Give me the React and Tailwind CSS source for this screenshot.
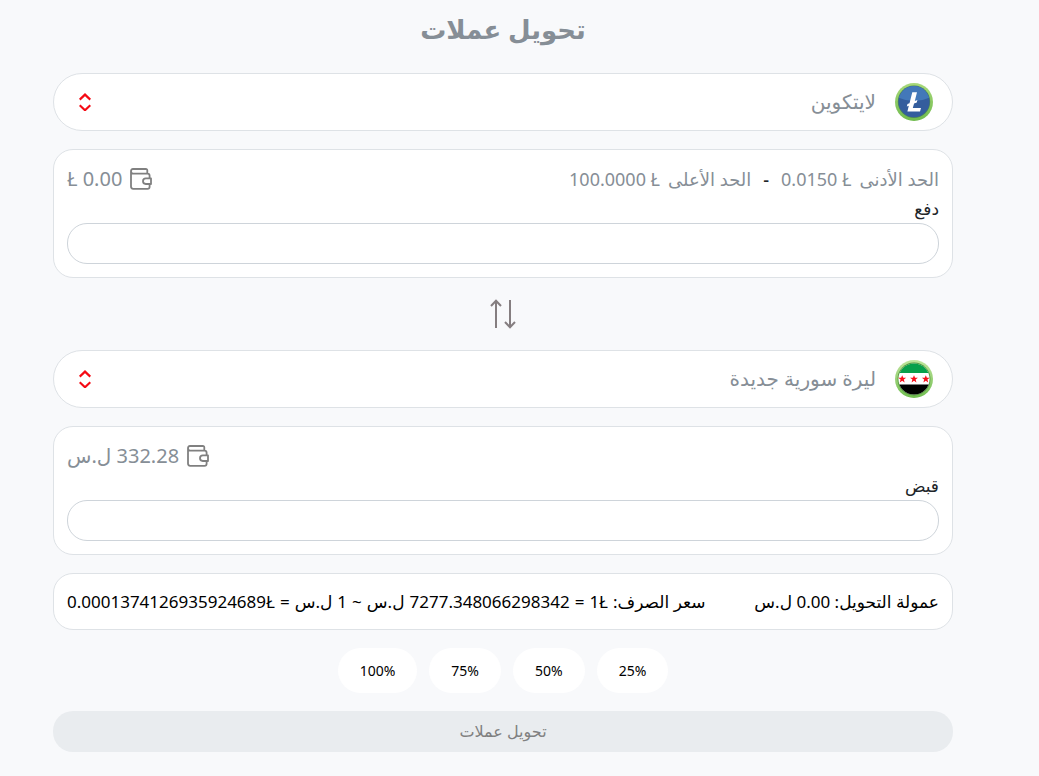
import React, { useId, useState } from "react";

function LitecoinIcon() {
  return (
    <svg viewBox="0 0 38 38" className="size-[38px] shrink-0" aria-hidden="true">
      <defs>
        <linearGradient id="ltc-ring" x1="0" y1="0" x2="0" y2="1">
          <stop offset="0" stopColor="#a9d97b" />
          <stop offset="1" stopColor="#6fbb4d" />
        </linearGradient>
        <clipPath id="ltc-face">
          <circle cx="19" cy="18.7" r="15.6" />
        </clipPath>
      </defs>
      <circle cx="19" cy="19" r="19" fill="url(#ltc-ring)" />
      <circle cx="19" cy="18.7" r="16.2" fill="#4f8a53" />
      <g clipPath="url(#ltc-face)">
        <rect width="38" height="38" fill="#345d9d" />
        <path d="M0 0H38V13Q19 23 0 13Z" fill="#4378b9" />
      </g>
      <path d="M17.3 9.3H22L19.8 18L22.4 17L21.8 19.5L19.1 20.6L17.8 25H26L25 28.5H12.4L13.8 22.8L11.8 23.6L12.5 21.1L14.5 20.2Z" fill="#fff" />
    </svg>
  );
}

const STAR = "M0 -3L0.8 -1H2.9L1.2 0.3L1.8 2.4L0 1.1L-1.8 2.4L-1.2 0.3L-2.9 -1H-0.8Z";

function SyriaIcon() {
  return (
    <svg viewBox="0 0 38 38" className="size-[38px] shrink-0" aria-hidden="true">
      <defs>
        <linearGradient id="syp-ring" x1="0" y1="0" x2="0" y2="1">
          <stop offset="0" stopColor="#c0e59d" />
          <stop offset="1" stopColor="#70bd50" />
        </linearGradient>
        <clipPath id="syp-face">
          <circle cx="19" cy="19" r="15.6" />
        </clipPath>
      </defs>
      <circle cx="19" cy="19" r="19" fill="url(#syp-ring)" />
      <circle cx="19" cy="19" r="16.4" fill="#4e9438" />
      <g clipPath="url(#syp-face)">
        <rect width="38" height="38" fill="#fff" />
        <rect width="38" height="13" fill="#08a04b" />
        <rect y="24.5" width="38" height="14" fill="#000" />
      </g>
      <g fill="#f50f1a">
        <path d={STAR} transform="translate(7.2 19.2) scale(1.35)" />
        <path d={STAR} transform="translate(19 19.2) scale(1.35)" />
        <path d={STAR} transform="translate(30.8 19.2) scale(1.35)" />
      </g>
    </svg>
  );
}

function Chevrons() {
  return (
    <svg viewBox="0 0 12 18" className="h-[18px] w-3 shrink-0" fill="none" stroke="#f50a14" strokeWidth="2.2" aria-hidden="true">
      <path d="M0.7 6.6L6 1.6L11.3 6.6M0.7 12.2L6 17.2L11.3 12.2" />
    </svg>
  );
}

function WalletIcon() {
  return (
    <svg viewBox="0 0 22 22" className="size-[22px] shrink-0" fill="none" stroke="#808080" strokeWidth="1.8" strokeLinejoin="round" aria-hidden="true">
      <path d="M17.3 5.6V2.5Q17.3 1 15.8 1H3Q1 1 1 3.3Q1 5.6 3 5.6H17.5Q19.6 5.6 19.6 7.7V10.2M1 3.3V18.6Q1 20.8 3.2 20.8H17.5Q19.6 20.8 19.6 18.7V16.2" />
      <path d="M21 10.4V16H15.8Q13 15.8 13 13.2Q13 10.4 15.8 10.4Z" />
    </svg>
  );
}

function SwapIcon() {
  return (
    <svg viewBox="0 0 26 30" className="h-[30px] w-[26px]" fill="none" stroke="#857e80" strokeWidth="2" aria-hidden="true">
      <path d="M6 29V1.5M1 7L6 1.8L11 7M20 1V28.5M15 23L20 28.2L25 23" />
    </svg>
  );
}

function CurrencySelect({ label, icon, options }) {
  return (
    <div className="flex h-[58px] items-center rounded-[29px] border border-[#dee2e6] bg-white ps-[19px] pe-[25px]">
      {icon}
      <select aria-label={label} className="h-full min-w-0 flex-1 appearance-none bg-transparent ps-[19px] text-[20px] text-[#868e96] outline-none">
        {options.map((name) => (
          <option key={name}>{name}</option>
        ))}
      </select>
      <Chevrons />
    </div>
  );
}

function Limit({ name, value }) {
  return (
    <span className="flex items-center gap-2">
      <span>{name}</span>
      <span dir="ltr">{value}</span>
    </span>
  );
}

function AmountCard({ label, limits, balance }) {
  const id = useId();
  const [amount, setAmount] = useState("");
  return (
    <section className="rounded-[20px] border border-[#dee2e6] bg-white px-[13px] pt-[15px] pb-[13px]">
      <div className="flex h-7 items-center justify-between text-[#868e96]">
        <div className="flex items-center text-[18px]">{limits}</div>
        <div className="flex items-center gap-2 text-[20px]">
          <WalletIcon />
          <span>{balance}</span>
        </div>
      </div>
      <label htmlFor={id} className="block h-[30px] text-[17px] leading-8 text-[#212529]">{label}</label>
      <input
        id={id}
        inputMode="decimal"
        value={amount}
        onChange={(e) => setAmount(e.target.value)}
        className="block h-[41px] w-full rounded-[20px] border border-[#ced4da] bg-white px-4 text-[16px] outline-none"
      />
    </section>
  );
}

export default function App() {
  return (
    <main dir="rtl" lang="ar" className="min-h-screen bg-[#f8f9fb] ps-[86px] pe-[53px] pb-6 font-['Noto_Sans','DejaVu_Sans',sans-serif] text-black">
      <h1 className="h-[73px] pt-2 text-center text-[26px] leading-[42px] font-bold text-[#868e96]">تحويل عملات</h1>
      <form className="flex flex-col gap-[18px]" onSubmit={(e) => e.preventDefault()}>
        <CurrencySelect label="العملة المدفوعة" icon={<LitecoinIcon />} options={["لايتكوين", "ليرة سورية جديدة"]} />
        <AmountCard
          label="دفع"
          limits={
            <>
              <Limit name="الحد الأدنى" value="0.0150 Ł" />
              <span className="mx-3 font-medium text-[#212529]">-</span>
              <Limit name="الحد الأعلى" value="100.0000 Ł" />
            </>
          }
          balance={<bdi dir="ltr">Ł 0.00</bdi>}
        />
        <button type="button" aria-label="تبديل العملات" className="flex h-9 items-center justify-center self-center">
          <SwapIcon />
        </button>
        <CurrencySelect label="العملة المقبوضة" icon={<SyriaIcon />} options={["ليرة سورية جديدة", "لايتكوين"]} />
        <AmountCard label="قبض" balance="332.28 ل.س" />
        <section className="flex min-h-[57px] items-center justify-between rounded-[20px] border border-[#dee2e6] bg-white px-[13px] text-[17px] whitespace-nowrap">
          <p>عمولة التحويل: 0.00 ل.س</p>
          <p className="flex gap-[5px]">
            <span>سعر الصرف:</span>
            <span dir="ltr">1Ł</span>
            <span>=</span>
            <span>7277.348066298342</span>
            <span>ل.س</span>
            <span>~</span>
            <span>1</span>
            <span>ل.س</span>
            <span>=</span>
            <span dir="ltr">0.0001374126935924689Ł</span>
          </p>
        </section>
        <div className="flex justify-center gap-3 text-[14px]">
          {[25, 50, 75, 100].map((percent) => (
            <button key={percent} type="button" dir="ltr" className="h-[45px] rounded-full bg-white px-[22px]">
              {percent}%
            </button>
          ))}
        </div>
        <button type="submit" disabled className="h-[41px] rounded-[20px] bg-[#e9ecef] pb-0.5 text-[16px] text-[#808080]">
          تحويل عملات
        </button>
      </form>
    </main>
  );
}
